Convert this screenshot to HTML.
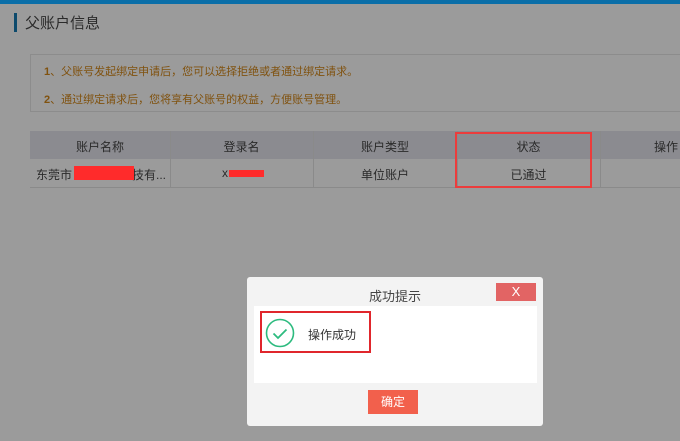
<!DOCTYPE html>
<html><head><meta charset="utf-8"><style>
*{margin:0;padding:0;box-sizing:border-box}
body{width:680px;height:441px;overflow:hidden;background:#9b9b9b;font-family:"Liberation Sans","Noto Sans CJK SC",sans-serif;position:relative;font-size:12px;color:#2a2a2a}
.a{position:absolute}
</style></head><body>
<div class="a" style="left:0;top:0;width:680px;height:4px;background:#0a6ea8"></div>
<div class="a" style="left:14px;top:13px;width:3px;height:19px;background:#0d4a6c"></div>
<div class="a" style="left:25px;top:12px;font-size:15px;color:#2a2a2a">父账户信息</div>
<div class="a" style="left:30px;top:54px;width:660px;height:58px;border:1px solid #8c8c8c"></div>
<div class="a" style="left:44px;top:63px;color:#80520f;font-size:11px"><b>1</b>、父账号发起绑定申请后，您可以选择拒绝或者通过绑定请求。</div>
<div class="a" style="left:44px;top:91px;color:#80520f;font-size:11px"><b>2</b>、通过绑定请求后，您将享有父账号的权益，方便账号管理。</div>
<div class="a" style="left:30px;top:131px;width:650px;height:28px;background:#8b8b90"></div>
<div class="a" style="left:30px;top:187px;width:650px;height:1px;background:#8a8a8a"></div>
<div class="a" style="left:170px;top:131px;width:1px;height:57px;background:#8a8a8a"></div>
<div class="a" style="left:313px;top:131px;width:1px;height:57px;background:#8a8a8a"></div>
<div class="a" style="left:457px;top:131px;width:1px;height:57px;background:#8a8a8a"></div>
<div class="a" style="left:600px;top:131px;width:1px;height:57px;background:#8a8a8a"></div>
<div class="a" style="left:30px;top:138px;width:140px;text-align:center">账户名称</div>
<div class="a" style="left:170px;top:138px;width:143px;text-align:center">登录名</div>
<div class="a" style="left:313px;top:138px;width:144px;text-align:center">账户类型</div>
<div class="a" style="left:457px;top:138px;width:143px;text-align:center">状态</div>
<div class="a" style="left:654px;top:138px">操作</div>
<div class="a" style="left:36px;top:166px">东莞市<span style="display:inline-block;width:60px"></span>技有...</div>
<div class="a" style="left:74px;top:166px;width:60px;height:14px;background:#ff2b2b"></div>
<div class="a" style="left:222px;top:166px">x</div>
<div class="a" style="left:229px;top:170px;width:35px;height:7px;background:#ff2b2b"></div>
<div class="a" style="left:313px;top:166px;width:144px;text-align:center">单位账户</div>
<div class="a" style="left:457px;top:166px;width:143px;text-align:center">已通过</div>
<div class="a" style="left:455px;top:132px;width:137px;height:56px;border:2px solid #ec3c3c"></div>

<div class="a" style="left:247px;top:277px;width:296px;height:149px;background:#f3f3f3;border-radius:3px"></div>
<div class="a" style="left:247px;top:286px;width:296px;text-align:center;font-size:13px;color:#444">成功提示</div>
<div class="a" style="left:496px;top:283px;width:40px;height:18px;background:#e26464;color:#fff;text-align:center;font-size:13px;line-height:18px">X</div>
<div class="a" style="left:254px;top:306px;width:283px;height:77px;background:#fff"></div>
<div class="a" style="left:260px;top:311px;width:111px;height:42px;border:2px solid #e0262c"></div>
<svg class="a" style="left:265px;top:318px" width="30" height="30"><circle cx="15" cy="15" r="13.5" fill="none" stroke="#2dbb7f" stroke-width="1.6"/><path d="M8.5 15.5l4.5 4.5 8.5-8.5" fill="none" stroke="#2dbb7f" stroke-width="1.8"/></svg>
<div class="a" style="left:308px;top:326px;font-size:12px;color:#333">操作成功</div>
<div class="a" style="left:368px;top:390px;width:50px;height:24px;background:#f2604c;color:#fff;text-align:center;line-height:24px;font-size:12px">确定</div>
</body></html>
